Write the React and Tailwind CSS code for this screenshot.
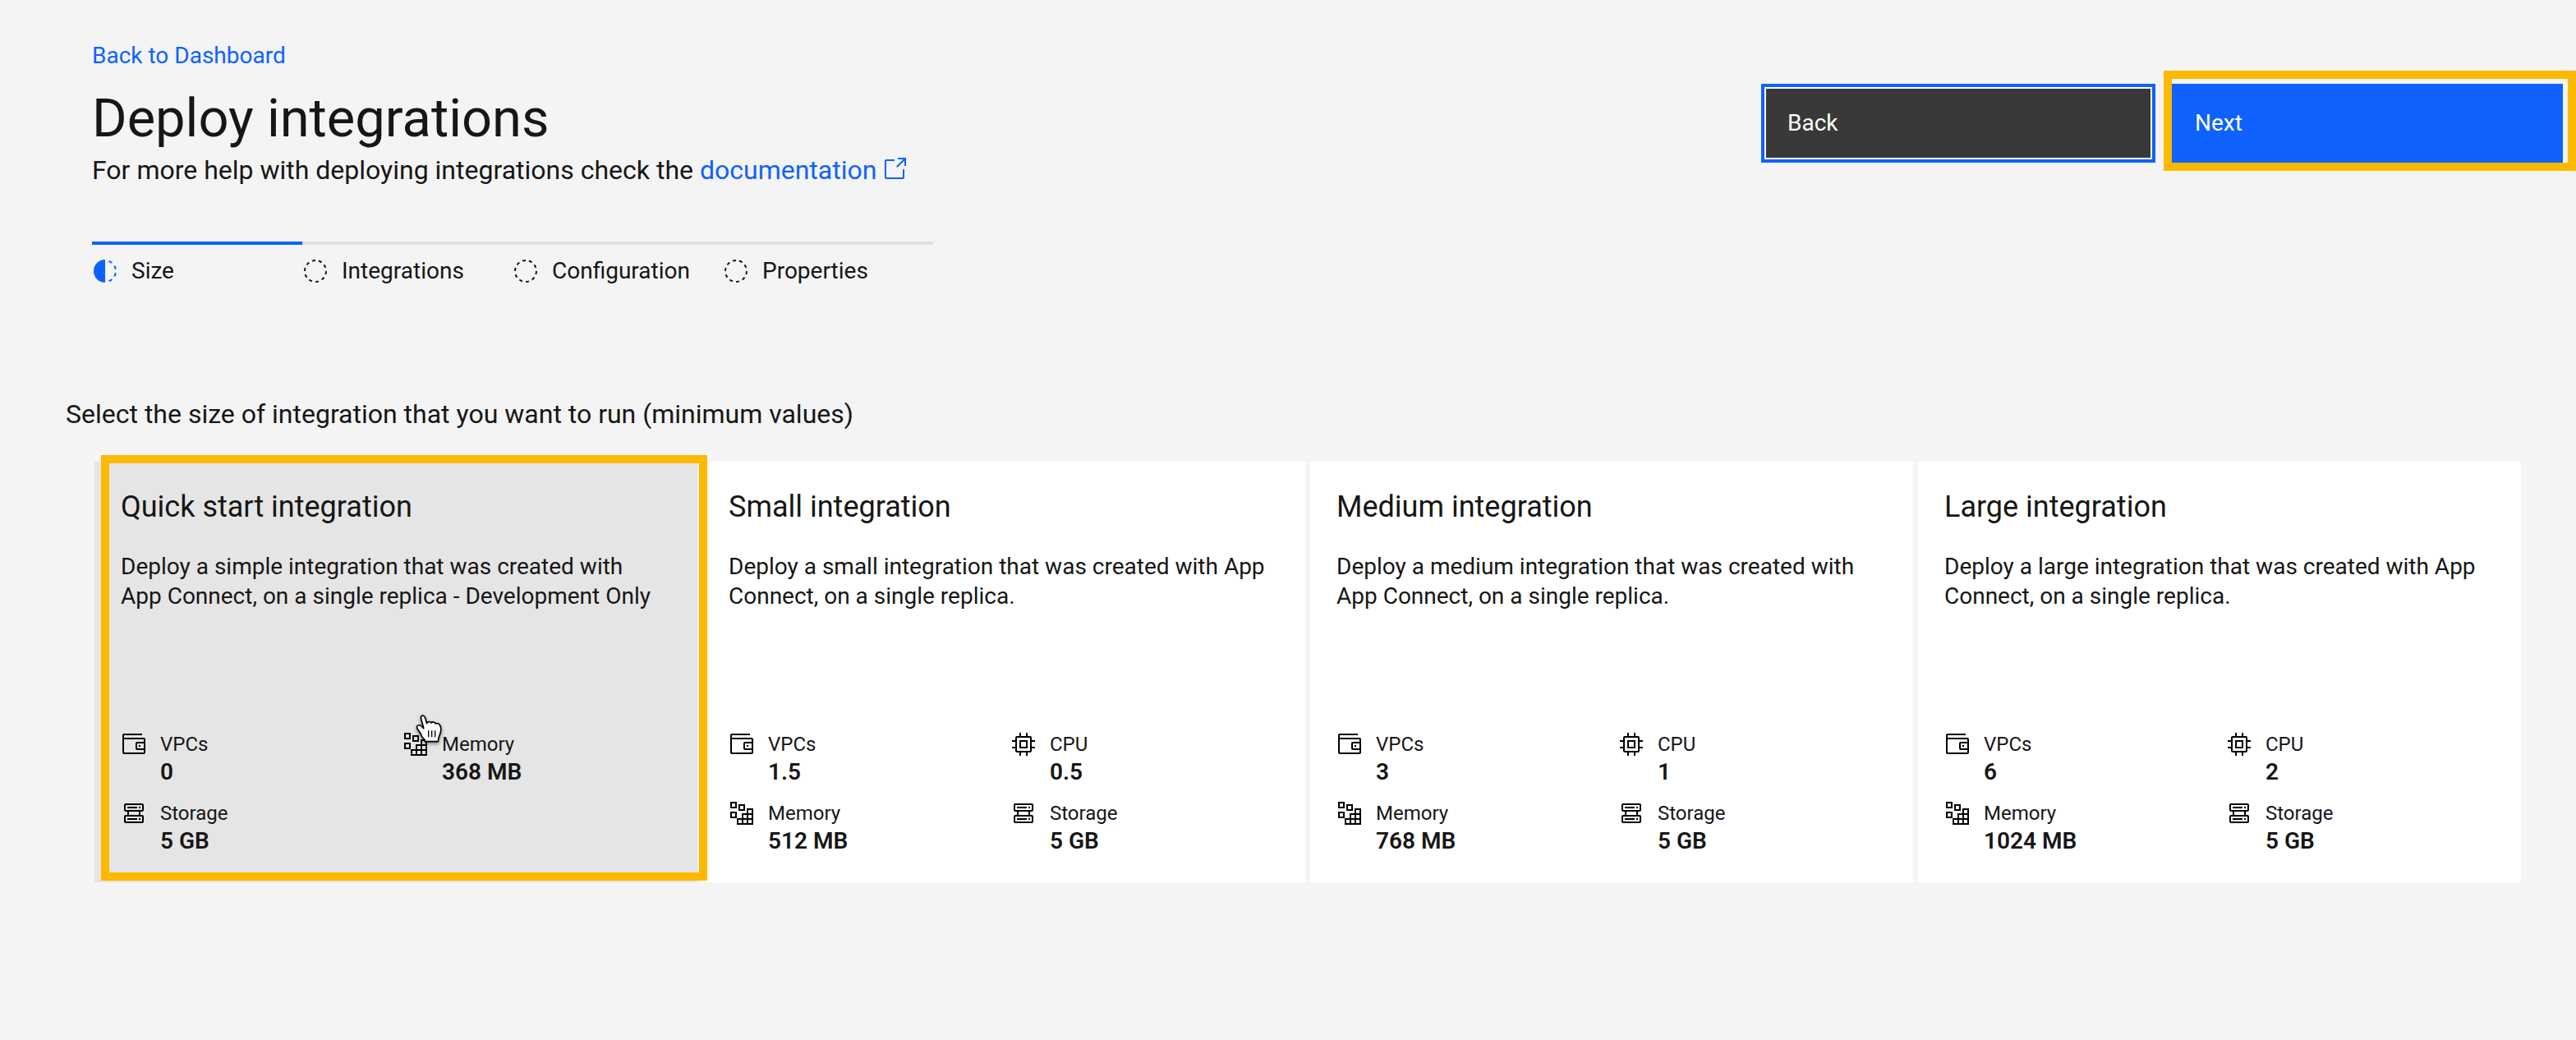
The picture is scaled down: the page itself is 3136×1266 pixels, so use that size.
const INCOMPLETE =
  "M23.7642 6.8593l1.2851-1.5315A13.976 13.976 0 0 0 20.8672 2.887l-.6836 1.8776A11.9729 11.9729 0 0 1 23.7642 6.8593zM27.81 14l1.9677-.4128A13.8888 13.8888 0 0 0 28.14 9.0457L26.4087 10A12.52 12.52 0 0 1 27.81 14zM20.1836 27.2354l.6836 1.8776a13.976 13.976 0 0 0 4.1821-2.4408l-1.2851-1.5315A11.9729 11.9729 0 0 1 20.1836 27.2354zM26.4087 22L28.14 23a14.14 14.14 0 0 0 1.6382-4.5872L27.81 18.0659A12.1519 12.1519 0 0 1 26.4087 22zM16 30V2a14 14 0 0 0 0 28z";

const CIRCLE_DASH =
  "M7.7 4.7a14.7 14.7 0 0 0-3 3.1L6.3 9A13.26 13.26 0 0 1 8.9 6.3zM4.6 12.3l-1.9-.6A12.51 12.51 0 0 0 2 16H4A11.48 11.48 0 0 1 4.6 12.3zM2.7 20.4a14.4 14.4 0 0 0 2 3.9l1.6-1.2a12.89 12.89 0 0 1-1.7-3.3zM7.8 27.3a14.4 14.4 0 0 0 3.9 2l.6-1.9A12.89 12.89 0 0 1 9 25.7zM11.7 2.7l.6 1.9A11.48 11.48 0 0 1 16 4V2A12.51 12.51 0 0 0 11.7 2.7zM24.2 27.3a15.18 15.18 0 0 0 3.1-3.1L25.7 23A11.53 11.53 0 0 1 23 25.7zM27.4 19.7l1.9.6A15.47 15.47 0 0 0 30 16H28A11.48 11.48 0 0 1 27.4 19.7zM29.2 11.6a14.4 14.4 0 0 0-2-3.9L25.6 8.9a12.89 12.89 0 0 1 1.7 3.3zM24.1 4.6a14.4 14.4 0 0 0-3.9-2l-.6 1.9a12.89 12.89 0 0 1 3.3 1.7zM20.3 29.3l-.6-1.9A11.48 11.48 0 0 1 16 28v2A21.42 21.42 0 0 0 20.3 29.3z";

const LAUNCH =
  "M26,28H6a2,2,0,0,1-2-2V6A2,2,0,0,1,6,4H16V6H6V26H26V16h2V26A2,2,0,0,1,26,28ZM20 2V4H26.586L18 12.586 19.414 14 28 5.414V12H30V2Z";

const WALLET =
  "M22 17h2v2h-2zM28,8H4V5H26V3H4A2,2,0,0,0,2,5V26a2,2,0,0,0,2,2H28a2,2,0,0,0,2-2V10A2,2,0,0,0,28,8ZM4,26V10H28v3H20a2,2,0,0,0-2,2v6a2,2,0,0,0,2,2h8v3ZM28,15v6H20V15Z";

const CHIP =
  "M11,11V21H21V11Zm8,8H13V13h6ZM30,13V11H26V8a2,2,0,0,0-2-2H21V2H19V6H13V2H11V6H8A2,2,0,0,0,6,8v3H2v2H6v6H2v2H6v3a2,2,0,0,0,2,2h3v4h2V26h6v4h2V26h3a2,2,0,0,0,2-2V21h4V19H26V13ZM24,24H8V8H24Z";

function Icon({ d, className = "" }) {
  return (
    <svg viewBox="0 0 32 32" className={`size-8 shrink-0 fill-current ${className}`} aria-hidden="true">
      <path d={d} />
    </svg>
  );
}

const MEMORY_CELLS = [
  [3, 3], [13, 6], [3, 15], [23, 11], [17, 17], [23, 17], [11, 23], [17, 23], [23, 23],
];

function MemoryIcon() {
  return (
    <svg viewBox="0 0 32 32" className="size-8 shrink-0 fill-none stroke-black stroke-2" aria-hidden="true">
      {MEMORY_CELLS.map(([x, y]) => (
        <rect key={`${x}-${y}`} x={x} y={y} width="6" height="6" />
      ))}
    </svg>
  );
}

function StorageIcon() {
  return (
    <svg viewBox="0 0 32 32" className="size-8 shrink-0 fill-none stroke-black stroke-2" aria-hidden="true">
      <rect x="5" y="5" width="22" height="8" rx="1" />
      <rect x="5" y="19" width="22" height="8" rx="1" />
      <path d="M8 9H20M22 9H24M8 23H20M22 23H24M9 13V19M23 13V19" />
    </svg>
  );
}

function HandCursor() {
  return (
    <svg
      viewBox="0 0 108 120"
      className="pointer-events-none absolute top-[306px] left-[389px] z-10 h-10 w-9 overflow-visible drop-shadow-[0_2px_2px_rgba(0,0,0,0.45)]"
      aria-hidden="true"
    >
      <path
        d="M40 104V98C36 93 30 88 28 84C25 76 21 70 17 64C13 59 9 55 11 49C14 43 22 43 27 48L35 56C33 44 28 31 26 21C24 13 28 9 32 9C38 9 40 14 42 21L47 38C48 31 60 29 63 36C66 31 76 32 79 39C84 36 92 38 95 45C100 54 98 70 94 80C90 88 88 94 88 104Z"
        fill="#fff"
        stroke="#000"
        strokeWidth="5"
        strokeLinejoin="round"
      />
      <path d="M53 64V88M65 64V88M77 64V88" fill="none" stroke="#000" strokeWidth="4" />
    </svg>
  );
}

const STAT_ICONS = {
  VPCs: <Icon d={WALLET} className="text-black" />,
  CPU: <Icon d={CHIP} className="text-black" />,
  Memory: <MemoryIcon />,
  Storage: <StorageIcon />,
};

const STEPS = ["Size", "Integrations", "Configuration", "Properties"];

const SIZES = [
  {
    name: "Quick start integration",
    text: "Deploy a simple integration that was created with App Connect, on a single replica - Development Only",
    stats: [["VPCs", "0"], ["Memory", "368 MB"], ["Storage", "5 GB"]],
  },
  {
    name: "Small integration",
    text: "Deploy a small integration that was created with App Connect, on a single replica.",
    stats: [["VPCs", "1.5"], ["CPU", "0.5"], ["Memory", "512 MB"], ["Storage", "5 GB"]],
  },
  {
    name: "Medium integration",
    text: "Deploy a medium integration that was created with App Connect, on a single replica.",
    stats: [["VPCs", "3"], ["CPU", "1"], ["Memory", "768 MB"], ["Storage", "5 GB"]],
  },
  {
    name: "Large integration",
    text: "Deploy a large integration that was created with App Connect, on a single replica.",
    stats: [["VPCs", "6"], ["CPU", "2"], ["Memory", "1024 MB"], ["Storage", "5 GB"]],
  },
];

function SizeCard({ size, highlighted }) {
  return (
    <label
      className={`relative flex min-h-[512px] cursor-pointer flex-col px-8 pt-8 pb-8 ${
        highlighted ? "bg-[#e5e5e5]" : "bg-white"
      }`}
    >
      <input type="radio" name="size" className="sr-only" />
      <span className="text-[36px] leading-[46px]">{size.name}</span>
      <span className="mt-8 pr-3 text-[28px] leading-[36px]">{size.text}</span>
      <span className="mt-auto grid grid-cols-2 gap-4">
        {size.stats.map(([label, value]) => (
          <span key={label} className="flex gap-4">
            {STAT_ICONS[label]}
            <span className="flex flex-col">
              <span className="text-[24px] leading-[32px]">{label}</span>
              <span className="text-[28px] leading-[36px] font-semibold">{value}</span>
            </span>
          </span>
        ))}
      </span>
      {highlighted && (
        <>
          <HandCursor />
          <span className="pointer-events-none absolute -top-2 -right-3 bottom-0.5 left-2 z-10 border-10 border-[#fdb900]" />
        </>
      )}
    </label>
  );
}

export default function App() {
  return (
    <div className="min-h-screen bg-[#f4f4f4] pt-[50px] pb-16 font-[Roboto,'Liberation_Sans',sans-serif] text-[#161616]">
      <header className="flex items-start justify-between pr-4 pl-28">
        <div>
          <a href="#dashboard" className="block text-[28px] leading-[36px] text-[#0f62fe]">
            Back to Dashboard
          </a>
          <h1 className="mt-4 text-[65px] leading-[84px]">Deploy integrations</h1>
          <p className="text-[32px] leading-[42px]">
            For more help with deploying integrations check the{" "}
            <a href="#documentation" className="text-[#0f62fe]">
              documentation
              <Icon d={LAUNCH} className="ml-1.5 inline-block align-[-4px]" />
            </a>
          </p>
        </div>
        <div className="mt-[52px] flex gap-4 text-[28px] leading-[36px] text-white">
          <button
            type="button"
            className="h-24 w-[480px] border-4 border-[#0f62fe] bg-[#393939] pl-7 text-left shadow-[inset_0_0_0_2px_#fff]"
          >
            Back
          </button>
          <div className="relative">
            <button type="button" className="h-24 w-[480px] bg-[#0f62fe] pl-8 text-left">
              Next
            </button>
            <span className="pointer-events-none absolute -top-4 -right-4 -bottom-2.5 -left-1.5 border-10 border-[#fdb900]" />
          </div>
        </div>
      </header>

      <ol className="mt-[66px] ml-28 grid w-[1024px] grid-cols-4">
        {STEPS.map((step, i) => (
          <li
            key={step}
            className={`flex items-center gap-4 border-t-4 pt-3.5 text-[28px] leading-[36px] ${
              i === 0 ? "border-[#0f62fe]" : "border-[#e0e0e0]"
            }`}
          >
            <Icon d={i === 0 ? INCOMPLETE : CIRCLE_DASH} className={i === 0 ? "text-[#0f62fe]" : ""} />
            {step}
          </li>
        ))}
      </ol>

      <fieldset className="mt-[136px] pr-[67px] pl-20">
        <legend className="text-[32px] leading-[40px]">
          Select the size of integration that you want to run (minimum values)
        </legend>
        <div className="mt-[38px] ml-[35px] grid grid-cols-4 gap-1.5">
          {SIZES.map((size, i) => (
            <SizeCard key={size.name} size={size} highlighted={i === 0} />
          ))}
        </div>
      </fieldset>
    </div>
  );
}
